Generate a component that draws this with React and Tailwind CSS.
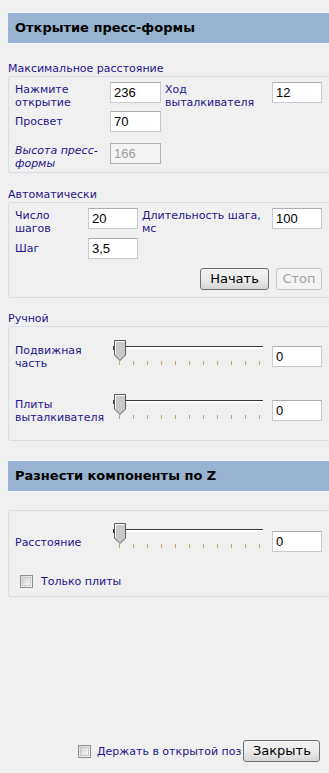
import React from "react";

const lbl = "text-[11px] leading-[13px] text-[#1f148c]";

const Field = ({ value, width = "w-[51px]", disabled }) => (
  <input
    readOnly
    value={value}
    className={`h-[21px] ${width} border px-[3px] text-[13px] outline-none ${
      disabled
        ? "border-[#adb2b5] bg-[#f4f4f4] text-[#9c9c9c]"
        : "border-[#c5cbd3] border-t-[#abadb3] bg-white text-black"
    }`}
    style={{ fontFamily: '"Liberation Sans", Arial, sans-serif' }}
  />
);

const GroupLabel = ({ children, className = "" }) => (
  <div className={`text-[11px] leading-[14px] text-[#1f148c] ${className}`}>{children}</div>
);

const Box = ({ children, className = "" }) => (
  <div className={`rounded-[3px] border border-[#d5dfe5] ${className}`}>{children}</div>
);

const Header = ({ title, className = "" }) => (
  <div className={`flex h-[30px] items-center bg-[#98b3d1] pl-[7px] ${className}`}>
    <span className="text-[13px] font-bold text-black">{title}</span>
  </div>
);

const Slider = () => (
  <div className="relative h-[28px] w-[152px]">
    {/* track */}
    <div className="absolute left-[12px] top-[6px] h-[1px] w-[138px] bg-[#3c3c3c]" />
    <div className="absolute left-[12px] top-[7px] h-[2px] w-[138px] bg-white" />
    <div className="absolute left-0 top-[6px] h-[4px] w-[1px] bg-[#3c3c3c]" />
    <div className="absolute left-0 top-[6px] h-[1px] w-[2px] bg-[#3c3c3c]" />
    {/* ticks */}
    <div className="absolute left-[6px] top-[21px] flex gap-[13px]">
      {Array.from({ length: 11 }).map((_, i) => (
        <div key={i} className="h-[4px] w-[1px] bg-[#c4a968]" />
      ))}
    </div>
    {/* thumb */}
    <svg className="absolute left-[1px] top-0" width="12" height="21" viewBox="0 0 12 21">
      <path d="M0.5 0.5 H11.5 V15 L6 20.5 L0.5 15 Z" fill="#c9c9c9" stroke="#5a5a5a" strokeWidth="1" />
      <path d="M1.5 1.5 H10.5" stroke="#ffffff" strokeWidth="1" />
      <path d="M1.5 1.5 V14.5" stroke="#ffffff" strokeWidth="1" />
    </svg>
  </div>
);

const Checkbox = () => (
  <div className="h-[13px] w-[13px] border border-[#8f8f8f] bg-gradient-to-br from-[#dcdcdc] to-[#f8f8f8] p-[1px]">
    <div className="h-full w-full border border-[#c8c8c8] bg-gradient-to-br from-[#d4d4d4] to-[#f6f6f6]" />
  </div>
);

const Button = ({ children, disabled, width }) => (
  <div
    className={`flex h-[22px] ${width} items-center justify-center rounded-[3px] border text-[13px] ${
      disabled
        ? "border-[#c6c6c6] bg-[#f4f4f4] text-[#a3a3a3]"
        : "border-[#707070] bg-gradient-to-b from-[#f2f2f2] via-[#ebebeb] to-[#d6d6d6] text-black"
    }`}
    style={{ fontFamily: '"DejaVu Sans", Verdana, sans-serif' }}
  >
    {children}
  </div>
);

export default function App() {
  return (
    <div
      className="h-[773px] w-[329px] overflow-hidden bg-[#f0f0f0]"
      style={{ fontFamily: '"DejaVu Sans", Verdana, sans-serif' }}
    >
      <div className="flex w-[340px] flex-col pl-[8px] pt-[13px]">
        <Header title="Открытие пресс-формы" />

        <GroupLabel className="mt-[19px]">Максимальное расстояние</GroupLabel>
        <Box className="flex h-[97px] flex-col pl-[6px] pt-[5px]">
          <div className="flex items-start">
            <div className={`${lbl} w-[95px] pt-[1px]`}>Нажмите<br />открытие</div>
            <Field value="236" />
            <div className={`${lbl} ml-[4px] w-[107px] pt-[1px]`}>Ход<br />выталкивателя</div>
            <Field value="12" width="w-[50px]" />
          </div>
          <div className="mt-[2px] flex items-center">
            <div className={`${lbl} w-[95px]`}>Просвет</div>
            <Field value="70" />
          </div>
          <div className="mt-[11px] flex items-start">
            <div className={`${lbl} w-[95px] pt-[1px] italic`}>Высота пресс-<br />формы</div>
            <Field value="166" disabled />
          </div>
        </Box>

        <GroupLabel className="mt-[15px]">Автоматически</GroupLabel>
        <Box className="flex h-[96px] flex-col pl-[6px] pt-[5px]">
          <div className="flex items-start">
            <div className={`${lbl} w-[73px] pt-[1px]`}>Число<br />шагов</div>
            <Field value="20" width="w-[50px]" />
            <div className={`${lbl} ml-[4px] w-[130px] pt-[1px]`}>Длительность шага,<br />мс</div>
            <Field value="100" width="w-[50px]" />
          </div>
          <div className="mt-[3px] flex items-center">
            <div className={`${lbl} w-[73px]`}>Шаг</div>
            <Field value="3,5" width="w-[50px]" />
          </div>
          <div className="mt-[9px] flex gap-[7px] pl-[185px]">
            <Button width="w-[69px]">Начать</Button>
            <Button width="w-[46px]" disabled>Стоп</Button>
          </div>
        </Box>

        <GroupLabel className="mt-[14px]">Ручной</GroupLabel>
        <Box className="flex h-[115px] flex-col pl-[6px] pt-[13px]">
          <div className="flex items-start">
            <div className={`${lbl} w-[98px] pt-[4px]`}>Подвижная<br />часть</div>
            <Slider />
            <div className="ml-[7px] mt-[4px]">
              <Field value="0" width="w-[50px]" />
            </div>
          </div>
          <div className="mt-[24px] flex items-start">
            <div className={`${lbl} w-[98px] pt-[4px]`}>Плиты<br />выталкивателя</div>
            <Slider />
            <div className="ml-[7px] mt-[4px]">
              <Field value="0" width="w-[50px]" />
            </div>
          </div>
        </Box>

        <Header title="Разнести компоненты по Z" className="mt-[20px]" />

        <Box className="mt-[19px] flex h-[87px] flex-col pl-[6px] pt-[12px]">
          <div className="flex items-start">
            <div className={`${lbl} w-[98px] pt-[13px]`}>Расстояние</div>
            <Slider />
            <div className="ml-[7px] mt-[6px]">
              <Field value="0" width="w-[50px]" />
            </div>
          </div>
          <div className="ml-[5px] mt-[22px] flex items-center gap-[8px]">
            <Checkbox />
            <span className={lbl}>Только плиты</span>
          </div>
        </Box>

        <div className="mt-[143px] flex items-center pl-[70px]">
          <Checkbox />
          <span className={`${lbl} ml-[6px] mr-[2px] whitespace-nowrap`}>Держать в открытой поз</span>
          <Button width="w-[77px]">Закрыть</Button>
        </div>
      </div>
    </div>
  );
}
